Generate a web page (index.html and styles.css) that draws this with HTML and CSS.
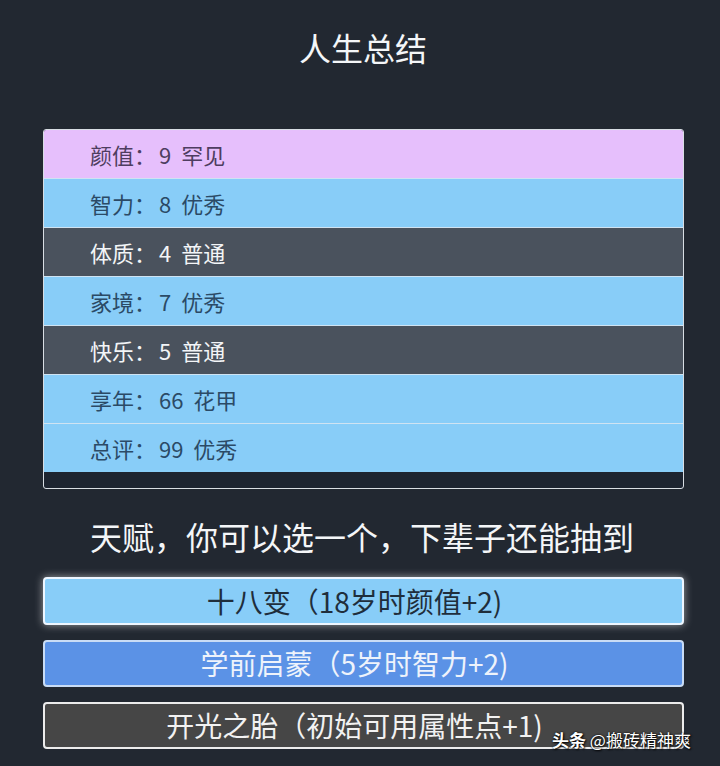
FILE: index.html
```html
<!DOCTYPE html>
<html lang="zh">
<head>
<meta charset="utf-8">
<title>人生总结</title>
<link rel="stylesheet" href="styles.css">
</head>
<body>
<div class="page">
  <h1 class="title">人生总结</h1>
  <div class="summary">
    <div class="row pink">颜值：<span class="val">9 罕见</span></div>
    <div class="row blue">智力：<span class="val">8 优秀</span></div>
    <div class="row dark">体质：<span class="val">4 普通</span></div>
    <div class="row blue">家境：<span class="val">7 优秀</span></div>
    <div class="row dark">快乐：<span class="val">5 普通</span></div>
    <div class="row blue">享年：<span class="val">66 花甲</span></div>
    <div class="row blue">总评：<span class="val">99 优秀</span></div>
  </div>
  <h2 class="title sub">天赋，你可以选一个，下辈子还能抽到</h2>
  <div class="talents">
    <div class="talent t-light">十八变（18岁时颜值+2)</div>
    <div class="talent t-blue">学前启蒙（5岁时智力+2)</div>
    <div class="talent t-gray">开光之胎（初始可用属性点+1)</div>
  </div>
  <div class="watermark"><b>头条</b> @搬砖精神爽</div>
</div>
</body>
</html>
```
FILE: styles.css
```css
html, body {
  margin: 0;
  padding: 0;
  background: #222831;
}
.page {
  position: relative;
  width: 720px;
  height: 766px;
  overflow: hidden;
  font-family: "Noto Sans CJK SC", "Noto Sans", sans-serif;
  background: #222831;
}
.title {
  margin: 27px 0 0;
  height: 40px;
  line-height: 40px;
  font-size: 32px;
  font-weight: 400;
  color: #f4f6f8;
  text-align: center;
}
.title:first-child {
  padding-left: 6px;
}
.sub {
  margin-top: 27px;
  padding-left: 4px;
}
.summary {
  margin: 62px 0 0 43px;
  width: 639px;
  border: 1px solid #d8dde3;
  border-radius: 3px;
  padding-bottom: 16px;
  background: #1d2430;
}
.row {
  height: 48px;
  line-height: 48px;
  border-bottom: 1px solid #cfe3f2;
  padding-left: 46px;
  font-size: 22px;
}
.val {
  margin-left: 3px;
  word-spacing: 5px;
}
.pink {
  background: #e6bffc;
  color: #4e3d60;
  border-top-left-radius: 2px;
  border-top-right-radius: 2px;
}
.blue {
  background: #88cdf8;
  color: #2b4a66;
}
.dark {
  background: #4a525d;
  color: #f3f5f7;
}
.row:last-child {
  border-bottom: none;
}
.talents {
  margin: 21px 0 0 43px;
  width: 641px;
  display: flex;
  flex-direction: column;
  gap: 15px;
}
.talent {
  box-sizing: border-box;
  height: 48px;
  line-height: 44px;
  border-radius: 4px;
  text-align: center;
  font-size: 28px;
  padding-right: 18px;
}
.t-light {
  background: #88cdf8;
  color: #1f2e3c;
  border: 2px solid #eef6ff;
  box-shadow: 0 0 8px rgba(255, 255, 255, 0.55);
}
.t-blue {
  background: #5b92e6;
  color: #eef3fb;
  border: 2px solid #c9dcf5;
  height: 47px;
  line-height: 43px;
}
.t-gray {
  background: #464646;
  color: #f2f2f2;
  border: 2px solid #ececec;
  height: 47px;
  line-height: 43px;
}
.watermark {
  position: absolute;
  left: 552px;
  top: 727px;
  font-size: 17px;
  line-height: 26px;
  color: #ffffff;
  text-shadow: 0 0 2px #000, 1px 1px 2px #000;
  white-space: nowrap;
}
.watermark b {
  font-weight: 700;
}
```
